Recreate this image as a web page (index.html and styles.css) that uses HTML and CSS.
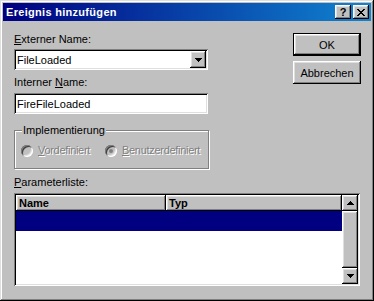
FILE: index.html
```html
<!DOCTYPE html>
<html lang="de">
<head>
    <meta charset="UTF-8">
    <title>Ereignis hinzufügen</title>
    <link rel="stylesheet" href="styles.css">
</head>
<body>
    <div class="dialog">
        <div class="titlebar">
            <span class="title">Ereignis hinzufügen</span>
            <div class="caption-btns">
                <span class="cap-btn raised">?</span>
                <span class="cap-btn raised">
                    <svg width="8" height="7" viewBox="0 0 8 7" shape-rendering="crispEdges">
                        <path d="M0 0h2v1h-2z M6 0h2v1h-2z M1 1h2v1h-2z M5 1h2v1h-2z M2 2h4v1h-4z M3 3h2v1h-2z M2 4h4v1h-4z M1 5h2v1h-2z M5 5h2v1h-2z M0 6h2v1h-2z M6 6h2v1h-2z"/>
                    </svg>
                </span>
            </div>
        </div>
        <div class="content">
            <div class="top">
                <div class="left">
                    <div class="lbl first"><u>E</u>xterner Name:</div>
                    <div class="combo sunken">
                        <span class="combo-text">FileLoaded</span>
                        <span class="drop-btn raised">
                            <svg width="7" height="4" viewBox="0 0 7 4" shape-rendering="crispEdges"><path d="M0 0h7v1h-1v1h-1v1h-1v1h-1v-1h-1v-1h-1v-1h-1z"/></svg>
                        </span>
                    </div>
                    <div class="lbl second">Interner <u>N</u>ame:</div>
                    <div class="textbox sunken">FireFileLoaded</div>
                    <fieldset class="group">
                        <legend>Implementierung</legend>
                        <div class="radio-row">
                            <span class="radio-item wide"><span class="radio"></span><span class="dis"><u>V</u>ordefiniert</span></span>
                            <span class="radio-item"><span class="radio checked"></span><span class="dis"><u>B</u>enutzerdefiniert</span></span>
                        </div>
                    </fieldset>
                    <div class="lbl third"><u>P</u>arameterliste:</div>
                </div>
                <div class="buttons">
                    <button class="btn default">OK</button>
                    <button class="btn raised">Abbrechen</button>
                </div>
            </div>
            <div class="listview">
                <div class="lv-main">
                    <div class="lv-header">
                        <div class="col col-name raised">Name</div>
                        <div class="col col-typ raised">Typ</div>
                    </div>
                    <div class="lv-body">
                        <div class="row selected"></div>
                    </div>
                </div>
                <div class="scrollbar">
                    <div class="sb-btn raised">
                        <svg width="7" height="4" viewBox="0 0 7 4" shape-rendering="crispEdges"><path d="M3 0h1v1h1v1h1v1h1v1h-7v-1h1v-1h1v-1h1z"/></svg>
                    </div>
                    <div class="sb-thumb raised"></div>
                    <div class="sb-btn raised">
                        <svg width="7" height="4" viewBox="0 0 7 4" shape-rendering="crispEdges"><path d="M0 0h7v1h-1v1h-1v1h-1v1h-1v-1h-1v-1h-1v-1h-1z"/></svg>
                    </div>
                </div>
            </div>
        </div>
    </div>
</body>
</html>
```

FILE: styles.css
```css
body { margin: 0; background: #c0c0c0; }
.dialog {
    width: 374px;
    height: 301px;
    box-sizing: border-box;
    padding: 3px;
    background: #c0c0c0;
    box-shadow: inset -1px -1px #000, inset 1px 1px #dfdfdf, inset -2px -2px #808080, inset 2px 2px #fff;
    font-family: "Liberation Sans", Arial, sans-serif;
    font-size: 11px;
    color: #000;
}
.raised {
    background: #c0c0c0;
    box-shadow: inset -1px -1px #000, inset 1px 1px #fff, inset -2px -2px #808080, inset 2px 2px #dfdfdf;
}
.sunken {
    background: #fff;
    box-shadow: inset 1px 1px #808080, inset -1px -1px #fff, inset 2px 2px #000, inset -2px -2px #dfdfdf;
}

/* Titelleiste */
.titlebar {
    height: 18px;
    display: flex;
    align-items: center;
    padding-left: 3px;
    background: linear-gradient(90deg, #000080, #1084d0);
}
.title { flex: 1; color: #fff; font-weight: bold; letter-spacing: 0.3px; }
.caption-btns { display: flex; gap: 2px; padding-right: 2px; }
.cap-btn {
    width: 16px;
    height: 14px;
    display: flex;
    align-items: center;
    justify-content: center;
    font-weight: bold;
    font-size: 11px;
    line-height: 14px;
}

/* Inhalt */
.content { padding: 12px 10px 0 11px; }
.top { display: flex; align-items: flex-start; }
.left { width: 195px; }
.lbl { line-height: 13px; }
.lbl.second { margin-top: 6px; }
.lbl.third { margin-top: 7px; }
.combo, .textbox {
    width: 194px;
    height: 21px;
    box-sizing: border-box;
    padding: 2px;
    display: flex;
    align-items: center;
}
.combo { margin-top: 3px; }
.textbox { margin-top: 4px; padding-left: 3px; }
.combo-text { flex: 1; padding-left: 1px; }
.drop-btn { width: 16px; height: 17px; display: flex; align-items: center; justify-content: center; }

.group {
    width: 195px;
    box-sizing: border-box;
    margin: 10px 0 0;
    padding: 0 0 11px;
    border: 1px solid #808080;
    box-shadow: 1px 1px 0 #fff, inset 1px 1px 0 #fff;
}
.group legend {
    margin-left: 7px;
    padding: 0 1px;
    line-height: 13px;
    background: #c0c0c0;
}
.radio-row { display: flex; align-items: center; height: 13px; margin-top: 7px; padding-left: 6px; }
.radio-item { display: flex; align-items: center; gap: 5px; }
.radio-item.wide { width: 84px; }
.radio {
    width: 12px;
    height: 12px;
    border-radius: 50%;
    background: #c0c0c0;
    display: flex;
    align-items: center;
    justify-content: center;
    box-shadow: inset 1px 1px #808080, inset -1px -1px #fff, inset 2px 2px #404040, inset -2px -2px #dfdfdf;
}
.radio.checked::after { content: ""; width: 4px; height: 4px; border-radius: 50%; background: #808080; }
.dis { color: #808080; text-shadow: 1px 1px 0 #fff; line-height: 13px; letter-spacing: -0.3px; }

.buttons { margin-left: auto; display: flex; flex-direction: column; gap: 5px; }
.btn {
    width: 68px;
    height: 23px;
    border: 0;
    padding: 0;
    font: inherit;
    color: #000;
}
.btn.default {
    background: #c0c0c0;
    box-shadow: inset 0 0 0 1px #000, inset -2px -2px #000, inset 2px 2px #fff, inset -3px -3px #808080, inset 3px 3px #dfdfdf;
}

/* Parameterliste */
.listview {
    margin: 4px 1px 0 0;
    height: 93px;
    box-sizing: border-box;
    padding: 2px;
    display: flex;
    background: #fff;
    box-shadow: inset 1px 1px #808080, inset -1px -1px #fff, inset 2px 2px #000, inset -2px -2px #dfdfdf;
}
.lv-main { flex: 1; display: flex; flex-direction: column; }
.lv-header { display: flex; height: 16px; }
.col {
    box-sizing: border-box;
    padding: 1px 0 0 3px;
    line-height: 15px;
    font-weight: bold;
}
.col-name { width: 150px; }
.col-typ { flex: 1; }
.lv-body { flex: 1; background: #fff; }
.row.selected { height: 20px; background: #000080; }
.scrollbar { width: 16px; display: flex; flex-direction: column; }
.sb-btn { height: 16px; display: flex; align-items: center; justify-content: center; }
.sb-thumb { flex: 1; }
```
